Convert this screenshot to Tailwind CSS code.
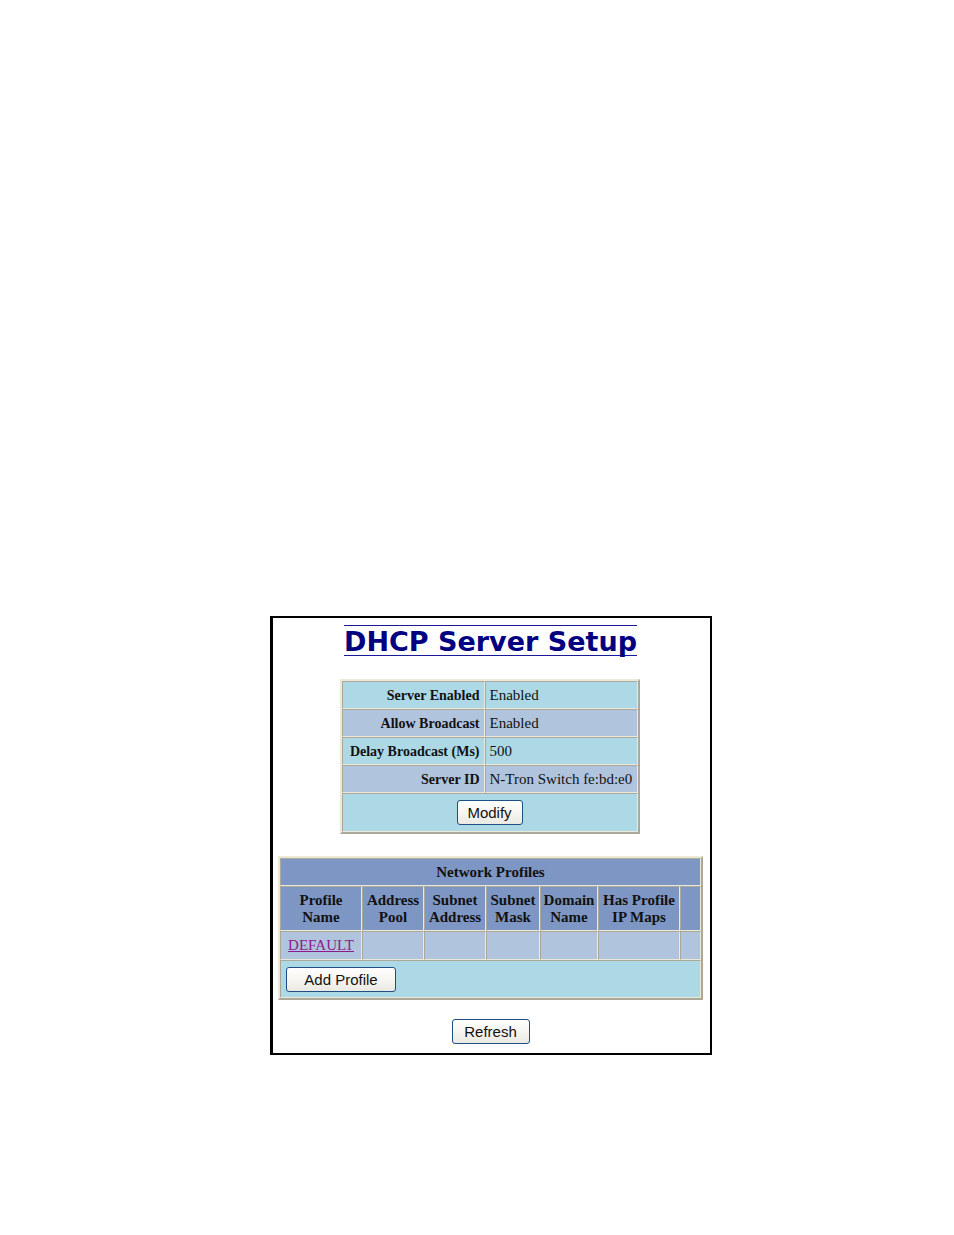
<!DOCTYPE html>
<html lang="en">
<head>
    <meta charset="UTF-8">
    <meta name="viewport" content="width=device-width, initial-scale=1.0">
    <title>DHCP Server Setup</title>
    <script src="https://cdn.jsdelivr.net/npm/@tailwindcss/browser@4"></script>
</head>
<body class="bg-white min-h-screen pt-[616px] pb-16 pl-7 font-['Liberation_Serif',serif] text-[15px] leading-[17px] text-[#111111]">

    <main class="w-fit mx-auto flex flex-col items-center border-2 border-l-3 border-black pl-[5px] pr-[7px] pt-[7px] pb-[9px]">
        <h1 class="border-y border-[#1a1a99] font-['DejaVu_Sans',sans-serif] text-[27px] leading-[31px] h-[31px] font-bold text-[#000080] whitespace-nowrap">DHCP Server Setup</h1>

        <!-- Server settings -->
        <table class="mt-[23px] mr-[2px] border-separate border-spacing-0 border-2 border-t-[#ece9d8] border-l-[#ece9d8] border-b-[#aca899] border-r-[#aca899] [&_:is(td,th)]:border [&_:is(td,th)]:border-t-[#aca899] [&_:is(td,th)]:border-l-[#aca899] [&_:is(td,th)]:border-b-[#ece9d8] [&_:is(td,th)]:border-r-[#ece9d8] [&_:is(td,th)]:px-1 whitespace-nowrap [&_th]:text-[14px]">
            <tbody>
                <tr class="h-7 bg-[#add8e6]">
                    <th scope="row" class="w-[143px] text-right">Server Enabled</th>
                    <td class="w-[153px]">Enabled</td>
                </tr>
                <tr class="h-7 bg-[#b0c4de]">
                    <th scope="row" class="text-right">Allow Broadcast</th>
                    <td>Enabled</td>
                </tr>
                <tr class="h-7 bg-[#add8e6]">
                    <th scope="row" class="text-right">Delay Broadcast (Ms)</th>
                    <td>500</td>
                </tr>
                <tr class="h-7 bg-[#b0c4de]">
                    <th scope="row" class="text-right">Server ID</th>
                    <td>N-Tron Switch fe:bd:e0</td>
                </tr>
                <tr class="h-[39px] bg-[#add8e6]">
                    <td colspan="2" class="text-center">
                        <button type="button" class="block mx-auto w-[66px] h-[25px] rounded-[3px] border border-[#1d4f84] bg-linear-to-b from-white via-[#f6f5f1] to-[#ebe9e2] font-['Liberation_Sans',sans-serif] text-[15px]">Modify</button>
                    </td>
                </tr>
            </tbody>
        </table>

        <!-- Network profiles -->
        <table class="mt-[22px] border-separate border-spacing-0 border-2 border-t-[#ece9d8] border-l-[#ece9d8] border-b-[#aca899] border-r-[#aca899] [&_:is(td,th)]:border [&_:is(td,th)]:border-t-[#aca899] [&_:is(td,th)]:border-l-[#aca899] [&_:is(td,th)]:border-b-[#ece9d8] [&_:is(td,th)]:border-r-[#ece9d8] [&_th]:px-[2px] [&_td]:px-[5px] whitespace-nowrap">
            <thead class="bg-[#7e96c4]">
                <tr class="h-7">
                    <th colspan="7">Network Profiles</th>
                </tr>
                <tr class="h-[45px]">
                    <th scope="col" class="w-[82px]">Profile<br>Name</th>
                    <th scope="col" class="w-[62px]">Address<br>Pool</th>
                    <th scope="col" class="w-[62px]">Subnet<br>Address</th>
                    <th scope="col" class="w-[54px]">Subnet<br>Mask</th>
                    <th scope="col" class="w-[58px]">Domain<br>Name</th>
                    <th scope="col" class="w-[82px]">Has Profile<br>IP Maps</th>
                    <th class="w-[21px]"></th>
                </tr>
            </thead>
            <tbody>
                <tr class="h-[29px] bg-[#b0c4de]">
                    <td class="text-center"><a href="#" class="text-[#8b1a8b] underline">DEFAULT</a></td>
                    <td></td>
                    <td></td>
                    <td></td>
                    <td></td>
                    <td></td>
                    <td></td>
                </tr>
                <tr class="h-[38px] bg-[#add8e6]">
                    <td colspan="7">
                        <button type="button" class="block w-[110px] h-[25px] rounded-[3px] border border-[#1d4f84] bg-linear-to-b from-white via-[#f6f5f1] to-[#ebe9e2] font-['Liberation_Sans',sans-serif] text-[15px]">Add Profile</button>
                    </td>
                </tr>
            </tbody>
        </table>

        <button type="button" class="mt-[19px] w-[78px] h-[25px] rounded-[3px] border border-[#1d4f84] bg-linear-to-b from-white via-[#f6f5f1] to-[#ebe9e2] font-['Liberation_Sans',sans-serif] text-[15px]">Refresh</button>
    </main>

</body>
</html>
